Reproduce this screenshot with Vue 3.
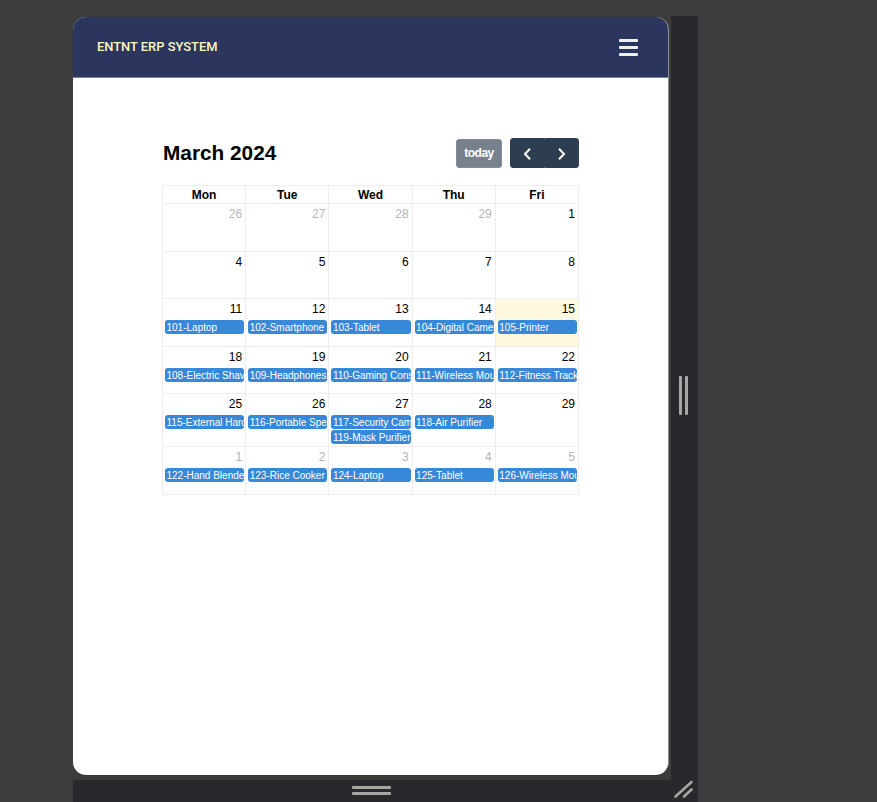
<script setup>
const today = 15;
const weeks = [
  [{ d: 26, off: true }, { d: 27, off: true }, { d: 28, off: true }, { d: 29, off: true }, { d: 1 }],
  [{ d: 4 }, { d: 5 }, { d: 6 }, { d: 7 }, { d: 8 }],
  [
    { d: 11, ev: ['101-Laptop'] },
    { d: 12, ev: ['102-Smartphone'] },
    { d: 13, ev: ['103-Tablet'] },
    { d: 14, ev: ['104-Digital Camera'] },
    { d: 15, ev: ['105-Printer'] },
  ],
  [
    { d: 18, ev: ['108-Electric Shaver'] },
    { d: 19, ev: ['109-Headphones'] },
    { d: 20, ev: ['110-Gaming Console'] },
    { d: 21, ev: ['111-Wireless Mouse'] },
    { d: 22, ev: ['112-Fitness Tracker'] },
  ],
  [
    { d: 25, ev: ['115-External Hard Drive'] },
    { d: 26, ev: ['116-Portable Speaker'] },
    { d: 27, ev: ['117-Security Camera', '119-Mask Purifier'] },
    { d: 28, ev: ['118-Air Purifier'] },
    { d: 29 },
  ],
  [
    { d: 1, off: true, ev: ['122-Hand Blender'] },
    { d: 2, off: true, ev: ['123-Rice Cooker'] },
    { d: 3, off: true, ev: ['124-Laptop'] },
    { d: 4, off: true, ev: ['125-Tablet'] },
    { d: 5, off: true, ev: ['126-Wireless Mouse'] },
  ],
];
const days = ['Mon', 'Tue', 'Wed', 'Thu', 'Fri'];
</script>

<template>
  <div class="frame">
    <div class="top-row">
      <div class="viewport">
        <div class="card">
          <header class="navbar">
            <span class="brand">ENTNT ERP SYSTEM</span>
            <button class="burger" aria-label="Menu"><i></i><i></i><i></i></button>
          </header>
          <main class="content">
            <div class="toolbar">
              <h2>March 2024</h2>
              <div class="actions">
                <button class="today">today</button>
                <div class="nav-group">
                  <button aria-label="prev">
                    <svg width="10" height="14" viewBox="0 0 10 14"><path d="M8 1.7 3 7l5 5.3" fill="none" stroke="#fff" stroke-width="2" /></svg>
                  </button>
                  <button aria-label="next">
                    <svg width="10" height="14" viewBox="0 0 10 14"><path d="M2 1.7 7 7l-5 5.3" fill="none" stroke="#fff" stroke-width="2" /></svg>
                  </button>
                </div>
              </div>
            </div>
            <div class="calendar">
              <div class="head-row">
                <div v-for="d in days" :key="d" class="head-cell">{{ d }}</div>
              </div>
              <div v-for="(w, i) in weeks" :key="i" class="week">
                <div
                  v-for="c in w"
                  :key="c.d"
                  class="day"
                  :class="{ off: c.off, now: c.d === today && !c.off }"
                >
                  <div class="num">{{ c.d }}</div>
                  <div class="events">
                    <div v-for="e in c.ev" :key="e" class="event">{{ e }}</div>
                  </div>
                </div>
              </div>
            </div>
          </main>
        </div>
      </div>
      <div class="side-handle"><i></i><i></i></div>
    </div>
    <div class="bottom-bar">
      <div class="bottom-handle"><i></i><i></i></div>
      <svg class="corner" width="24" height="22" viewBox="0 0 24 22">
        <path d="M4.5 19.5 20.5 5M13 19.5l7.500-7" stroke="#a6a6a6" stroke-width="2.600" stroke-linecap="round" fill="none" />
      </svg>
    </div>
  </div>
</template>

<style>
html, body { margin: 0; background: #3c3c3c; }
</style>

<style scoped>
.frame {
  width: 625px;
  height: 786px;
  margin: 16px 0 0 73px;
  display: flex;
  flex-direction: column;
  background: #28292c;
  font-family: "Liberation Sans", Arial, sans-serif;
}
.top-row { display: flex; height: 764px; }
.viewport {
  width: 598px;
  height: 764px;
  box-sizing: border-box;
  padding-top: 1px;
  background: #3c3c3c;
}
.card {
  width: 595px;
  height: 758px;
  background: #fff;
  border-radius: 13px;
  overflow: hidden;
  border-right: 1px solid #8b8b8b;
  box-shadow: 0 1px 0 #333;
}
.navbar {
  height: 60px;
  background: #2c355e;
  border-bottom: 1px solid #7d8194;
  display: flex;
  align-items: center;
  justify-content: space-between;
  padding: 0 30px 0 24px;
}
.brand {
  font-family: Roboto, sans-serif;
  font-weight: 500;
  font-size: 12.9px;
  color: #fdf8c0;
  margin-top: -2px;
}
.burger {
  width: 19px;
  height: 17px;
  margin-top: 1px;
  padding: 0;
  border: 0;
  background: none;
  display: flex;
  flex-direction: column;
  justify-content: space-between;
}
.burger i { display: block; height: 3px; background: #eee; border-radius: 1px; }
.content { padding: 60px 89px 0; }
.toolbar {
  display: flex;
  justify-content: space-between;
  align-items: center;
  height: 30px;
  margin-bottom: 17px;
}
h2 { margin: 0 0 0 1px; font-size: 20.8px; font-weight: 700; color: #000; }
.actions { display: flex; align-items: center; gap: 8px; }
.today {
  width: 46px;
  height: 29px;
  padding: 0;
  background: #76818d;
  border: 1px solid #838d98;
  border-radius: 3px;
  color: #fff;
  font: 700 12px "Liberation Sans", Arial, sans-serif;
  letter-spacing: -0.5px;
}
.nav-group { display: flex; }
.nav-group button {
  width: 34.5px;
  height: 30px;
  padding: 0;
  background: #2c3e50;
  border: 1px solid #2c3e50;
  display: flex;
  align-items: center;
  justify-content: center;
}
.nav-group svg { margin-top: 2px; }
.nav-group button:first-child { border-radius: 3px 0 0 3px; }
.nav-group button:last-child { border-radius: 0 3px 3px 0; }
.calendar {
  width: 417px;
  border-top: 1px solid #eee;
  border-left: 1px solid #eee;
  box-sizing: border-box;
}
.head-row, .week { display: grid; grid-template-columns: repeat(5, 1fr); border-bottom: 1px solid #eee; }
.head-cell {
  height: 17px;
  line-height: 18px;
  text-align: center;
  font-size: 12px;
  font-weight: 700;
  color: #000;
  border-right: 1px solid #eee;
}
.week { min-height: 46.5px; }
.day { min-width: 0; border-right: 1px solid #eee; font-size: 12px; color: #000; }
.day.now { background: #fffadf; }
.day.off .num { color: #b5b5b5; }
.num { text-align: right; padding: 3px 3px 0 0; height: 18px; line-height: 15px; }
.events { padding-bottom: 1px; }
.event {
  height: 14px;
  line-height: 15.5px;
  margin: 0 1px 1px 2px;
  padding: 0 1.5px;
  background: #3788d8;
  border-radius: 3px;
  color: #fff;
  font-size: 10px;
  white-space: nowrap;
  overflow: hidden;
}
.side-handle { flex: 1; display: flex; justify-content: center; align-items: flex-start; gap: 3px; padding: 360px 2px 0 0; }
.side-handle i { width: 3px; height: 39px; background: #a6a6a6; border-radius: 1px; }
.bottom-bar { position: relative; height: 22px; }
.bottom-handle { display: flex; flex-direction: column; gap: 3px; width: 39px; margin-left: 279px; padding-top: 6px; }
.bottom-handle i { height: 3px; background: #a6a6a6; border-radius: 1px; }
.corner { position: absolute; right: 3px; bottom: 3px; }
</style>
